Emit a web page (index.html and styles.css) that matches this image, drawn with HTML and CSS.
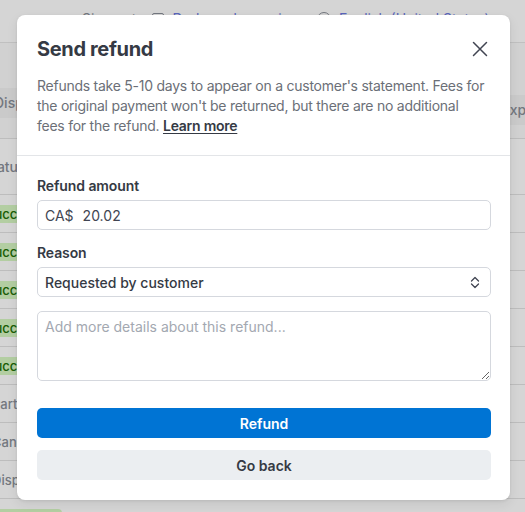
FILE: index.html
```html
<!DOCTYPE html>
<html lang="en">
<head>
<meta charset="utf-8">
<title>Send refund</title>
<link rel="stylesheet" href="styles.css">
</head>
<body>
<div class="page">
  <div class="topbar">
    <span class="muted">Sign out</span>
    <span class="boxicon"></span>
    <span class="link">Dark mode preview</span>
    <span class="globe"></span>
    <span class="link">English (United States)</span>
  </div>
  <div class="toolbar">
    <span class="tbtn left">Display</span>
    <span class="tbtn right">Export</span>
  </div>
  <div class="table">
    <div class="row head"><span class="cell">Status</span></div>
    <div class="row"><span class="badge ok">Succeeded</span></div>
    <div class="row"><span class="badge ok">Succeeded</span></div>
    <div class="row"><span class="badge ok">Succeeded</span></div>
    <div class="row"><span class="badge ok">Succeeded</span></div>
    <div class="row"><span class="badge ok">Succeeded</span></div>
    <div class="row"><span class="badge gray">Partial refund</span></div>
    <div class="row"><span class="badge gray">Canceled</span></div>
    <div class="row"><span class="badge gray">Disputed</span></div>
    <div class="row"><span class="badge ok">Succeeded</span></div>
  </div>
</div>
<div class="overlay"></div>
<div class="modal">
  <div class="modal-head">
    <div class="title-row">
      <h1 class="title">Send refund</h1>
      <button class="close" aria-label="Close">
        <svg width="16" height="16" viewBox="0 0 16 16"><path d="M1.5 1.5L14.5 14.5M14.5 1.5L1.5 14.5" stroke="#414552" stroke-width="1.5" stroke-linecap="round" fill="none"/></svg>
      </button>
    </div>
    <p class="desc">Refunds take 5-10 days to appear on a customer's statement. Fees for the original payment won't be returned, but there are no additional fees for the refund. <a class="learn" href="#">Learn more</a></p>
  </div>
  <div class="modal-body">
    <div class="field">
      <label class="label">Refund amount</label>
      <div class="input amount"><span class="prefix">CA$</span><span class="val">20.02</span></div>
    </div>
    <div class="field">
      <label class="label">Reason</label>
      <div class="input select"><span class="sel-text">Requested by customer</span>
        <svg width="10" height="13" viewBox="0 0 10 13"><path d="M1.5 5L5 1.5L8.5 5M1.5 8L5 11.5L8.5 8" stroke="#414552" stroke-width="1.3" fill="none" stroke-linecap="round" stroke-linejoin="round"/></svg>
      </div>
    </div>
    <textarea class="notes" placeholder="Add more details about this refund..."></textarea>
    <div class="actions">
      <button class="btn primary">Refund</button>
      <button class="btn secondary">Go back</button>
    </div>
  </div>
</div>
</body>
</html>
```

FILE: styles.css
```css
* { box-sizing: border-box; }
html, body { margin: 0; padding: 0; }
body {
  width: 525px;
  height: 512px;
  overflow: hidden;
  font-family: Inter, "Noto Sans", "Liberation Sans", sans-serif;
  background: #ffffff;
  position: relative;
}

/* background page */
.page { width: 525px; color: #6a7383; font-size: 14px; }
.topbar {
  height: 43px;
  border-bottom: 1px solid #e6e6e6;
  display: flex;
  align-items: flex-start;
  gap: 8px;
  padding-left: 82px;
  padding-top: 10px;
}
.muted { color: #8a8f98; margin-right: 8px; }
.link { color: #6c7ae0; margin-right: 8px; }
.boxicon { width: 12px; height: 12px; border: 1.5px solid #8a8f98; border-radius: 2px; margin-top: 3px; }
.globe { width: 14px; height: 14px; border: 1.5px solid #8a8f98; border-radius: 50%; margin-top: 2px; }
.toolbar {
  height: 96px;
  display: flex;
  justify-content: space-between;
  align-items: center;
  padding-top: 24px;
  background: #fbfbfb;
  border-bottom: 1px solid #e3e3e3;
}
.tbtn {
  height: 30px; line-height: 30px; padding: 0 10px;
  color: #8a8f98; background: #f2f2f2; font-weight: 500;
}
.tbtn.left { margin-left: -16px; }
.tbtn.right { margin-right: -30px; margin-top: 14px; }
.row {
  height: 38px;
  border-bottom: 1px solid #e3e3e3;
  display: flex;
  align-items: center;
}
.row.head { height: 56px; font-weight: 500; }
.cell { margin-left: -17px; color: #8a8f98; }
.badge {
  margin-left: -20px;
  padding: 1px 6px;
  border-radius: 4px;
  font-size: 13px;
  font-weight: 500;
}
.badge.ok { background: #d7f7c2; color: #217005; }
.badge.gray { background: transparent; color: #8a8f98; margin-left: -14px; }

.overlay {
  position: absolute;
  inset: 0;
  background: rgba(0, 0, 0, 0.165);
}

/* modal */
.modal {
  position: absolute;
  left: 17px;
  top: 15px;
  width: 493px;
  height: 485px;
  background: #fff;
  border-radius: 8px;
  box-shadow: 0 4px 12px rgba(0,0,0,0.08), 0 1px 3px rgba(0,0,0,0.08);
  display: flex;
  flex-direction: column;
}
.modal-head {
  padding: 21px 20px 19px 20px;
  border-bottom: 1px solid #e3e5e8;
}
.title-row { display: flex; justify-content: space-between; align-items: center; }
.title {
  margin: 0;
  font-size: 20px;
  line-height: 26px;
  font-weight: 700;
  color: #353a44;
  letter-spacing: -0.35px;
}
.close {
  border: 0; background: none; padding: 0; margin-right: 2px;
  width: 16px; height: 16px; display: flex;
}
.desc {
  margin: 14px 0 0 0;
  max-width: 449px;
  font-size: 14px;
  line-height: 20px;
  color: #6b6f77;
  letter-spacing: -0.25px;
}
.learn { color: #353a44; font-weight: 600; text-decoration: underline; text-underline-offset: 2px; }

.modal-body {
  padding: 20px 19px 20px 20px;
  display: flex;
  flex-direction: column;
}
.field { display: flex; flex-direction: column; gap: 4px; margin-bottom: 13px; }
.label {
  font-size: 14px;
  line-height: 20px;
  font-weight: 600;
  color: #353a44;
  letter-spacing: -0.1px;
}
.input {
  height: 30px;
  border: 1px solid #d5d8de;
  border-radius: 5px;
  display: flex;
  align-items: center;
  padding: 0 7px;
  font-size: 14px;
  color: #414552;
}
.prefix { margin-right: 9px; }
.select { justify-content: space-between; padding-right: 10px; }
.sel-text { font-weight: 500; color: #353a44; }
.notes {
  display: block;
  width: 100%;
  height: 70px;
  margin: 1px 0 0 0;
  border: 1px solid #d5d8de;
  border-radius: 5px;
  padding: 5px 7px;
  font-family: inherit;
  font-size: 14px;
  line-height: 20px;
  color: #414552;
  resize: vertical;
}
.notes::placeholder { color: #a3a8b1; }
.actions {
  margin-top: 27px;
  display: flex;
  flex-direction: column;
  gap: 12px;
}
.btn {
  height: 30px;
  border: 0;
  border-radius: 5px;
  font-family: inherit;
  font-size: 14px;
  font-weight: 600;
  width: 100%;
}
.primary { background: #0074d4; color: #fff; }
.secondary { background: #ebeef1; color: #353a44; }
```
